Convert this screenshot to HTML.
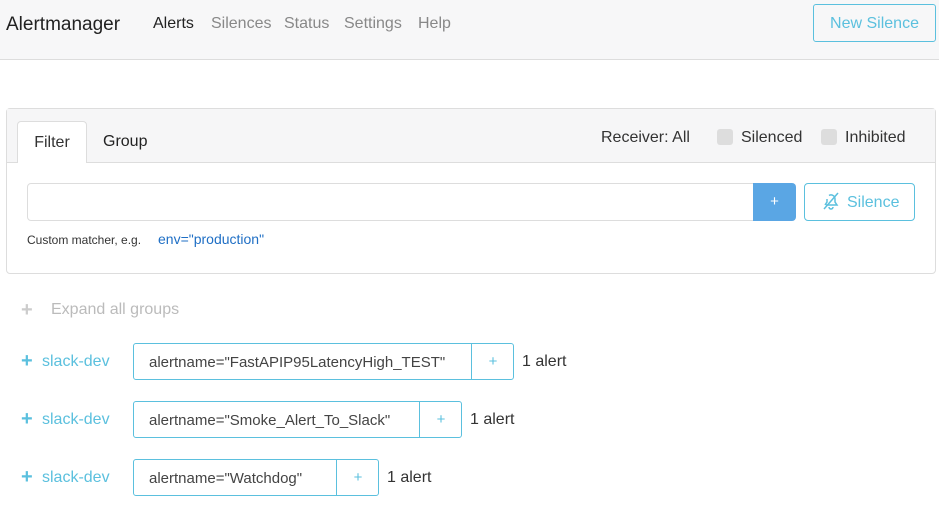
<!DOCTYPE html>
<html><head><meta charset="utf-8"><style>
*{box-sizing:border-box;margin:0;padding:0}
body{width:939px;height:508px;background:#fff;font-family:"Liberation Sans",sans-serif;color:#333;position:relative;overflow:hidden;font-size:15px}
.a{position:absolute;white-space:nowrap}
.hdr{left:0;top:0;width:939px;height:60px;background:#f7f7f8;border-bottom:1px solid #ddd}
.nav{color:#888;font-size:16px;top:15px}
.box{border:1px solid #5bc0de;border-radius:3px;height:37px;display:flex;align-items:center}
.box span{padding-left:15px;color:#444;padding-top:1px}
.box b{font-weight:normal;color:#5bc0de;border-left:1px solid #5bc0de;height:35px;display:flex;align-items:center;justify-content:center;position:absolute;top:0}
.sd{color:#5bc0de;font-size:16px}
</style></head><body>
<div class="a hdr"></div>
<div class="a" style="left:6px;top:14px;font-size:19px;color:#222">Alertmanager</div>
<div class="a nav" style="left:153px;color:#222">Alerts</div>
<div class="a nav" style="left:211px">Silences</div>
<div class="a nav" style="left:284px">Status</div>
<div class="a nav" style="left:344px">Settings</div>
<div class="a nav" style="left:418px">Help</div>
<div class="a" style="left:813px;top:4px;width:123px;height:38px;border:1px solid #5bc0de;border-radius:3px;color:#5bc0de;font-size:16px;text-align:center;line-height:38px">New Silence</div>

<div class="a" style="left:6px;top:108px;width:930px;height:166px;border:1px solid #ddd;border-radius:4px"></div>
<div class="a" style="left:7px;top:109px;width:928px;height:54px;background:#f6f6f7;border-bottom:1px solid #ddd"></div>
<div class="a" style="left:17px;top:121px;width:70px;height:42px;background:#fff;border:1px solid #ddd;border-bottom:none;border-radius:4px 4px 0 0;text-align:center;line-height:42px;font-size:16px">Filter</div>
<div class="a" style="left:103px;top:133px;font-size:16px;color:#222">Group</div>
<div class="a" style="left:601px;top:129px;font-size:16px;color:#333">Receiver: All</div>
<div class="a" style="left:717px;top:129px;width:16px;height:16px;background:#ddd;border-radius:3px"></div>
<div class="a" style="left:741px;top:129px;font-size:16px">Silenced</div>
<div class="a" style="left:821px;top:129px;width:16px;height:16px;background:#ddd;border-radius:3px"></div>
<div class="a" style="left:845px;top:129px;font-size:16px">Inhibited</div>

<div class="a" style="left:27px;top:183px;width:727px;height:38px;border:1px solid #ddd;border-radius:4px 0 0 4px"></div>
<div class="a" style="left:753px;top:183px;width:43px;height:38px;background:#5aa6e4;border-radius:0 4px 4px 0;color:#fff;text-align:center;line-height:38px;font-size:15px">+</div>
<div class="a" style="left:804px;top:183px;width:111px;height:38px;border:1px solid #5bc0de;border-radius:4px;color:#5bc0de;font-size:16px;line-height:38px;padding-left:16px">
<svg width="20" height="20" viewBox="0 0 20 20" style="vertical-align:-4px;margin-right:6px" fill="none" stroke="#5bc0de" stroke-width="1.5"><path d="M5 14h11l-2-3V8a4 4 0 0 0-6-3.5M6 8v3l-2 3"/><path d="M8 16a2 2 0 0 0 4 0"/><path d="M3 18L17 2"/></svg>Silence</div>
<div class="a" style="left:27px;top:233px;font-size:12px;color:#333">Custom matcher, e.g.</div>
<div class="a" style="left:158px;top:231px;font-size:14px;color:#1f6fc5">env="production"</div>

<div class="a" style="left:21px;top:299px;font-size:20px;color:#ccc;font-weight:bold">+</div>
<div class="a" style="left:51px;top:301px;font-size:16px;color:#bbb">Expand all groups</div>

<div class="a" style="left:21px;top:350px;font-size:20px;color:#5bc0de;font-weight:bold">+</div>
<div class="a sd" style="left:42px;top:353px">slack-dev</div>
<div class="a box" style="left:133px;top:343px;width:381px"><span>alertname="FastAPIP95LatencyHigh_TEST"</span><b style="left:337px;width:43px">+</b></div>
<div class="a" style="left:522px;top:353px;font-size:16px">1 alert</div>

<div class="a" style="left:21px;top:408px;font-size:20px;color:#5bc0de;font-weight:bold">+</div>
<div class="a sd" style="left:42px;top:411px">slack-dev</div>
<div class="a box" style="left:133px;top:401px;width:329px"><span>alertname="Smoke_Alert_To_Slack"</span><b style="left:285px;width:43px">+</b></div>
<div class="a" style="left:470px;top:411px;font-size:16px">1 alert</div>

<div class="a" style="left:21px;top:466px;font-size:20px;color:#5bc0de;font-weight:bold">+</div>
<div class="a sd" style="left:42px;top:469px">slack-dev</div>
<div class="a box" style="left:133px;top:459px;width:246px"><span>alertname="Watchdog"</span><b style="left:202px;width:43px">+</b></div>
<div class="a" style="left:387px;top:469px;font-size:16px">1 alert</div>
</body></html>
